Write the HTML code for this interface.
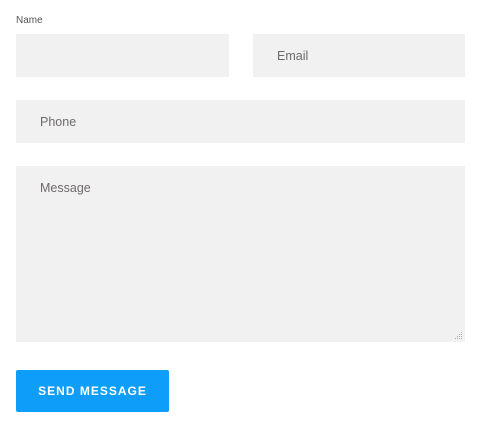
<!DOCTYPE html>
<html><head><style>
body{margin:0;background:#fff;font-family:"Liberation Sans",sans-serif;width:480px;height:424px;position:relative;overflow:hidden}
.b{position:absolute;background:#f1f1f1}
.t{position:absolute;color:#6e6a6a;font-size:12.5px}
</style></head><body>
<div class="t" style="left:16px;top:15px;font-size:10px;color:#555">Name</div>
<div class="b" style="left:16px;top:34px;width:213px;height:43px"></div>
<div class="b" style="left:253px;top:34px;width:212px;height:43px"></div>
<div class="t" style="left:277px;top:49px">Email</div>
<div class="b" style="left:16px;top:100px;width:449px;height:43px"></div>
<div class="t" style="left:40px;top:115px">Phone</div>
<div class="b" style="left:16px;top:166px;width:449px;height:176px"></div>
<div class="t" style="left:40px;top:181px">Message</div>
<svg style="position:absolute;left:455px;top:332px" width="8" height="8"><g fill="#aaa"><rect x="6" y="0" width="1" height="1"/><rect x="4" y="2" width="1" height="1"/><rect x="6" y="2" width="1" height="1"/><rect x="2" y="4" width="1" height="1"/><rect x="4" y="4" width="1" height="1"/><rect x="6" y="4" width="1" height="1"/><rect x="0" y="6" width="1" height="1"/><rect x="2" y="6" width="1" height="1"/><rect x="4" y="6" width="1" height="1"/><rect x="6" y="6" width="1" height="1"/></g></svg>
<div style="position:absolute;left:16px;top:370px;width:153px;height:42px;background:#0e9ef9;border-radius:2px;color:#fff;font-weight:bold;font-size:12px;letter-spacing:1px;line-height:42px;text-align:center">SEND MESSAGE</div>
</body></html>
